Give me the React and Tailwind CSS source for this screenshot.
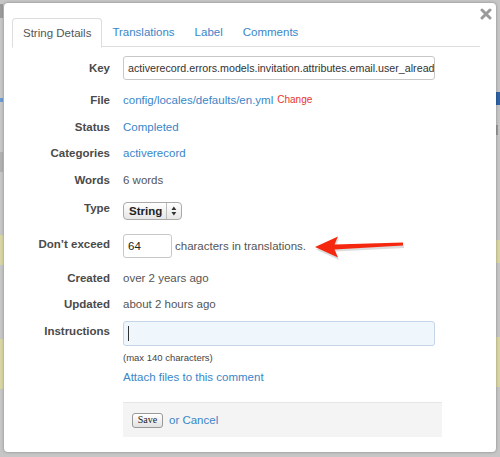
import React from 'react';

const Row = ({ label, h, mt, children, labelClass = '' }) => (
  <div className={`flex items-center ${h} ${mt}`}>
    <div className={`w-[106px] shrink-0 text-right font-bold text-[#4a4a4a] ${labelClass}`}>{label}</div>
    <div className="ml-[13px] flex items-center">{children}</div>
  </div>
);

const Arrow = () => (
  <svg width="92" height="26" viewBox="0 0 92 26" className="ml-[8px] mt-[4px]">
    <path d="M1 13 L24 2.5 L20.5 10 L89 8.5 L89 11.5 L20.5 15 L24 23.5 Z" fill="#9a9a9a" opacity="0.35" transform="translate(1 1.5)" />
    <path d="M1 12 L24 1.5 L20.5 9.5 L89 7.5 L89 10.5 L20.5 14.5 L24 22.5 Z" fill="#f5280f" />
  </svg>
);

const App = () => {
  return (
    <div className="w-[500px] h-[457px] bg-[#c6c6c6] flex overflow-hidden font-['Liberation_Sans',Arial,sans-serif] text-[11.5px] leading-[14px]">
      {/* backdrop, left edge */}
      <div className="w-[4px] shrink-0 flex flex-col">
        <div className="h-[14px] w-[3px] mt-[4px] bg-[#9a9a9a]" />
        <div className="h-[4px] w-[3px] mt-[80px] bg-[#6a9ad0]" />
        <div className="h-[20px] w-[3px] mt-[50px] bg-[#b0b0b0]" />
        <div className="h-[30px] w-[4px] mt-[63px] bg-[#d9d6a4]" />
        <div className="h-[50px] w-[4px] mt-[74px] bg-[#d9d6a4]" />
      </div>

      {/* modal */}
      <div className="relative mt-[3px] h-[449px] w-[492px] shrink-0 bg-white rounded-[4px] shadow-[0_0_3px_rgba(0,0,0,0.35)] text-[#555]">
        <button className="absolute top-[5px] right-[4px] w-[12px] h-[12px]">
          <svg width="12" height="12" viewBox="0 0 12 12">
            <path d="M2 2 L10 10 M10 2 L2 10" stroke="#9a9a9a" strokeWidth="3" strokeLinecap="round" />
          </svg>
        </button>

        {/* tabs */}
        <div className="mt-[15px] ml-[8px] mr-[16px] flex border-b border-[#ddd] h-[29px]">
          <div className="px-[10px] h-[30px] flex items-center border border-[#ddd] border-b-white rounded-t-[4px] bg-white text-[#555]">String Details</div>
          <div className="px-[10px] flex items-center text-[#3a86c8]">Translations</div>
          <div className="px-[10px] flex items-center text-[#3a86c8]">Label</div>
          <div className="px-[10px] flex items-center text-[#3a86c8]">Comments</div>
        </div>

        {/* form */}
        <Row label="Key" h="h-[24px]" mt="mt-[9px]">
          <div className="w-[312px] h-[24px] border border-[#c8c8c8] rounded-[3px] pl-[4px] flex items-center overflow-hidden whitespace-nowrap text-[10.7px] text-[#333]">
            activerecord.errors.models.invitation.attributes.email.user_already
          </div>
        </Row>
        <Row label="File" h="h-[26px]" mt="mt-[7px]">
          <span className="text-[#3a86c8]">config/locales/defaults/en.yml</span>
          <span className="ml-[4px] text-[10px] text-[#e8352b]">Change</span>
        </Row>
        <Row label="Status" h="h-[27px]" mt="">
          <span className="text-[#3a86c8]">Completed</span>
        </Row>
        <Row label="Categories" h="h-[26px]" mt="">
          <span className="text-[#3a86c8]">activerecord</span>
        </Row>
        <Row label="Words" h="h-[27px]" mt="">
          <span>6 words</span>
        </Row>
        <Row label="Type" h="h-[18px]" mt="mt-[9px]" labelClass="-mt-[6px]">
          <div className="w-[59px] h-[18px] border border-[#aaa] rounded-[4px] bg-gradient-to-b from-white to-[#e6e6e6] flex items-center text-[#222] font-bold">
            <span className="w-[43px] pl-[5px]">String</span>
            <span className="h-[16px] border-l border-[#bbb]" />
            <svg width="14" height="14" viewBox="0 0 14 14">
              <path d="M4.5 6 L7 2.5 L9.5 6 Z M4.5 8 L7 11.5 L9.5 8 Z" fill="#333" />
            </svg>
          </div>
        </Row>
        <Row label="Don’t exceed" h="h-[24px]" mt="mt-[14px]" labelClass="-mt-[5px]">
          <div className="w-[49px] h-[24px] border border-[#c8c8c8] rounded-[3px] pl-[4px] flex items-center text-[#222]">64</div>
          <span className="ml-[3px]">characters in translations.</span>
          <Arrow />
        </Row>
        <Row label="Created" h="h-[26px]" mt="mt-[7px]">
          <span>over 2 years ago</span>
        </Row>
        <Row label="Updated" h="h-[26px]" mt="">
          <span>about 2 hours ago</span>
        </Row>
        <div className="flex items-start mt-[4px]">
          <div className="w-[106px] shrink-0 text-right font-bold text-[#4a4a4a] pt-[3px]">Instructions</div>
          <div className="ml-[13px] flex flex-col">
            <div className="w-[312px] h-[25px] border border-[#c4d5e6] rounded-[3px] bg-[#eff6fc] flex items-center pl-[4px]">
              <span className="w-[1px] h-[15px] bg-[#333]" />
            </div>
            <div className="mt-[5px] h-[14px] text-[9.5px] text-[#444] flex items-center">(max 140 characters)</div>
            <div className="mt-[5px] h-[14px] text-[#3a86c8]">Attach files to this comment</div>
          </div>
        </div>

        {/* footer */}
        <div className="mt-[18px] ml-[119px] w-[319px] h-[35px] bg-[#f4f4f4] border-t border-[#e6e6e6] flex items-center pl-[9px]">
          <div className="w-[31px] h-[15px] border border-[#999] rounded-[3px] bg-gradient-to-b from-white to-[#e2e2e2] flex items-center justify-center text-[10px] text-[#222] font-['Liberation_Serif',serif]">
            Save
          </div>
          <span className="ml-[6px] text-[#3a86c8]">or Cancel</span>
        </div>
      </div>

      {/* backdrop, right edge */}
      <div className="w-[4px] shrink-0 flex flex-col">
        <div className="h-[13px] w-[4px] mt-[92px] bg-[#2e62a6]" />
        <div className="h-[10px] w-[2px] mt-[20px] bg-[#9a9a9a]" />
        <div className="h-[23px] w-[4px] mt-[105px] bg-[#d9d6a4]" />
        <div className="h-[50px] w-[4px] mt-[74px] bg-[#d9d6a4]" />
      </div>
    </div>
  );
};

export default App;
